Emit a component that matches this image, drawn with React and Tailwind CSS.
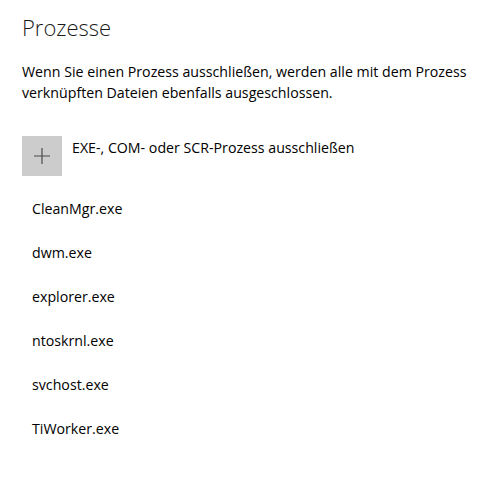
import React from 'react';

const processes = ['CleanMgr.exe', 'dwm.exe', 'explorer.exe', 'ntoskrnl.exe', 'svchost.exe', 'TiWorker.exe'];

const App = () => {
  return (
    <div className="min-h-[497px] w-[491px] bg-white text-black" style={{ fontFamily: '"Segoe UI", "Open Sans", "Noto Sans", sans-serif' }}>
      <div className="px-[22px] pt-[11px]">
        <h1 className="text-[22px] font-light leading-[32px] text-[#1a1a1a]">Prozesse</h1>
        <p className="mt-[18px] text-[14.2px] leading-[21px]">
          Wenn Sie einen Prozess ausschließen, werden alle mit dem Prozess verknüpften Dateien ebenfalls ausgeschlossen.
        </p>
        <button className="mt-[33px] flex items-start gap-[10px] text-left">
          <span className="flex h-[40px] w-[40px] items-center justify-center bg-[#cccccc]">
            <svg width="16" height="16" viewBox="0 0 16 16" fill="none">
              <path d="M8 0v16M0 8h16" stroke="#4a4a4a" strokeWidth="1.2" />
            </svg>
          </span>
          <span className="pt-[2px] text-[14.2px] leading-[20px]">EXE-, COM- oder SCR-Prozess ausschließen</span>
        </button>
        <ul className="mt-[11px] pl-[10px]">
          {processes.map((p) => (
            <li key={p} className="flex h-[44px] items-center text-[14.2px]">
              {p}
            </li>
          ))}
        </ul>
      </div>
    </div>
  );
};

export default App;
